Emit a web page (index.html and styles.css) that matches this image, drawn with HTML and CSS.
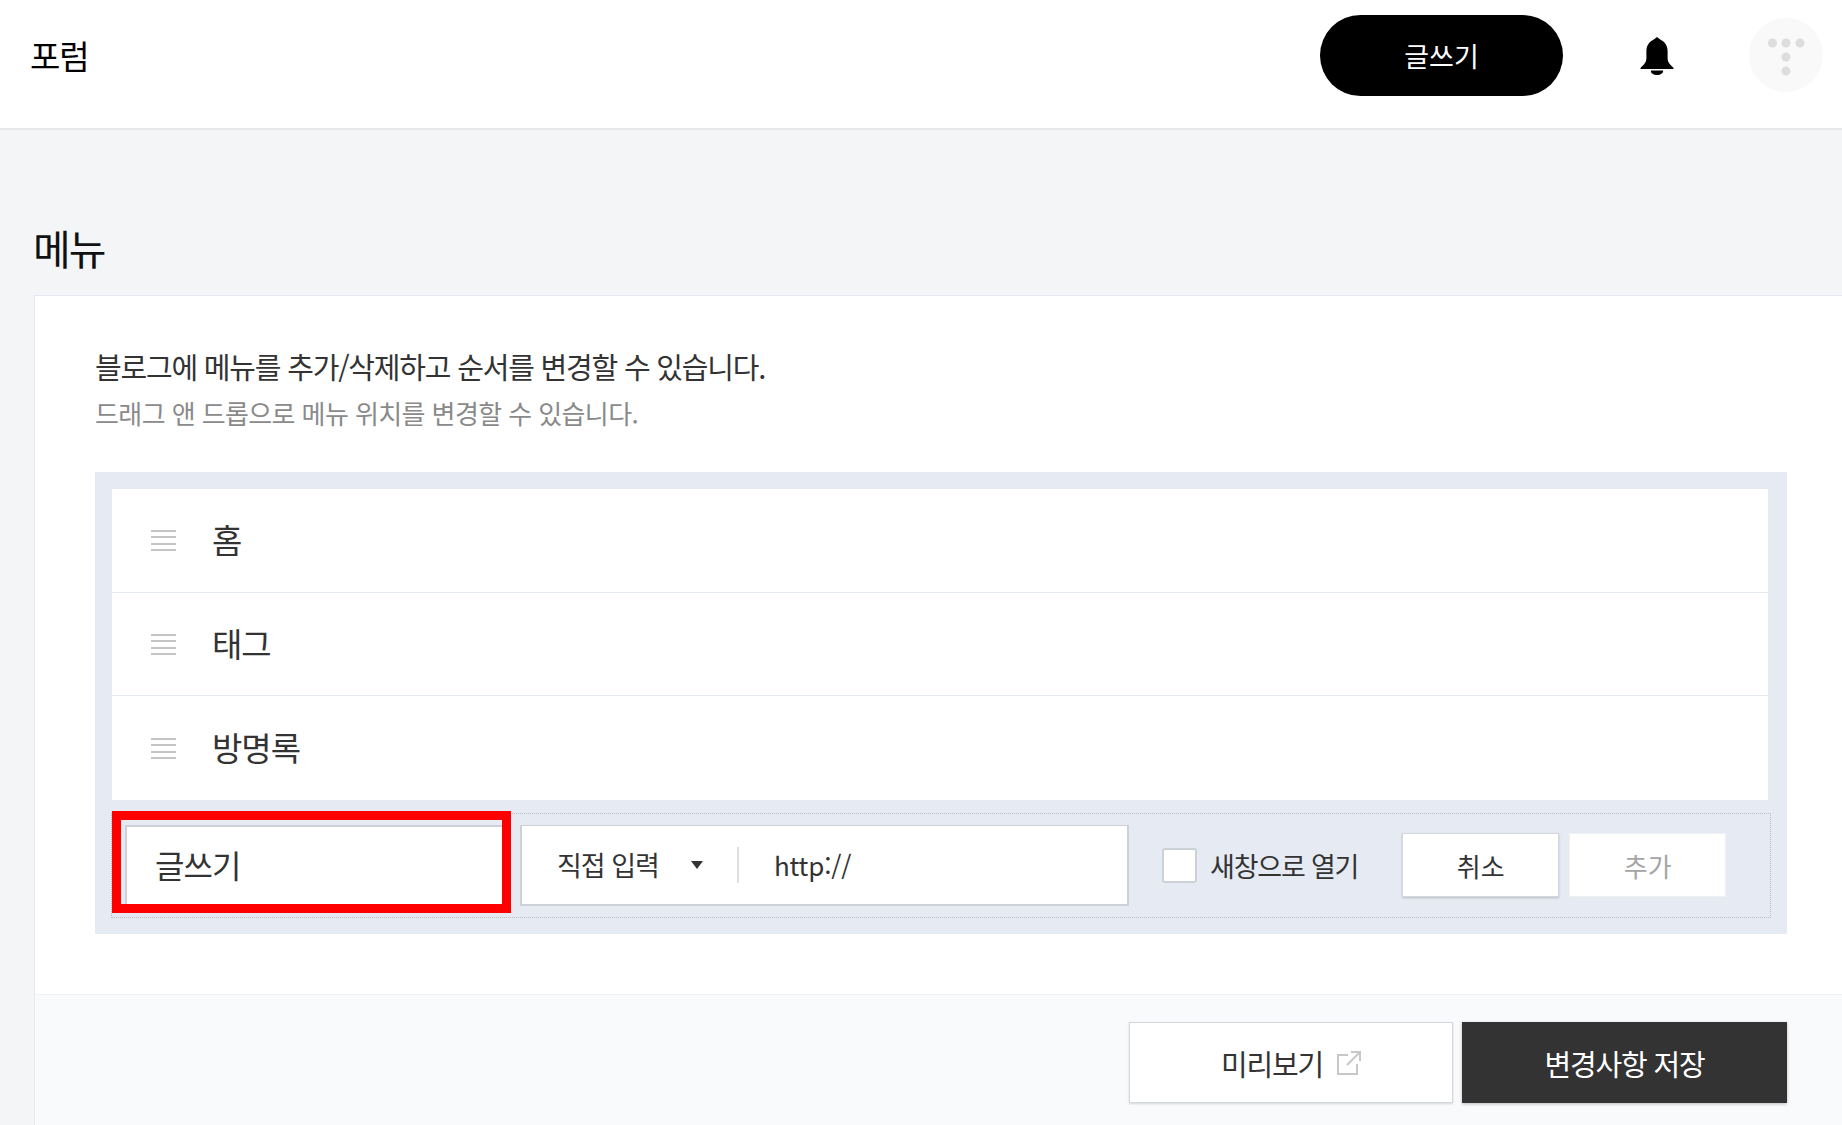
FILE: index.html
```html
<!DOCTYPE html>
<html lang="ko">
<head>
    <meta charset="UTF-8">
    <meta name="viewport" content="width=device-width, initial-scale=1.0">
    <title>메뉴</title>
    <link rel="stylesheet" href="styles.css">
</head>
<body>
    <header class="topbar">
        <div class="brand">포럼</div>
        <button class="write-btn">글쓰기</button>
        <svg class="bell" viewBox="0 0 34 38" aria-hidden="true">
            <path d="M17 0l3.2 2.4C25 4.6 27.6 9 27.6 14v7.5c0 3.4 2.2 6 4.8 8.2.9.7 1.2 1.6 1.2 2.3H.4c0-.7.3-1.6 1.2-2.3 2.6-2.2 4.800-4.800 4.800-8.200V14c0-5 2.600-9.400 7.400-11.600z"/>
            <path d="M10.800 33.500h12.400c0 2.800-2.600 4.500-6.200 4.500s-6.200-1.700-6.200-4.500z"/>
        </svg>
        <svg class="avatar" viewBox="0 0 74 74" aria-hidden="true">
            <circle cx="37" cy="37" r="37" fill="#f9f9f9"/>
            <circle cx="23.500" cy="25" r="4.500" fill="#dddddd"/>
            <circle cx="37" cy="25" r="4.500" fill="#dddddd"/>
            <circle cx="51" cy="25" r="4.500" fill="#dddddd"/>
            <circle cx="37" cy="39" r="4.500" fill="#dddddd"/>
            <circle cx="37" cy="53" r="4.500" fill="#dddddd"/>
        </svg>
    </header>

    <main class="content">
        <h2 class="page-title">메뉴</h2>
        <section class="panel">
            <div class="panel-body">
                <p class="desc">블로그에 메뉴를 추가/삭제하고 순서를 변경할 수 있습니다.</p>
                <p class="desc-sub">드래그 앤 드롭으로 메뉴 위치를 변경할 수 있습니다.</p>

                <div class="menu-box">
                    <ul class="menu-list">
                        <li class="menu-row"><span class="handle"></span>홈</li>
                        <li class="menu-row"><span class="handle"></span>태그</li>
                        <li class="menu-row"><span class="handle"></span>방명록</li>
                    </ul>
                    <div class="add-row">
                        <div class="name-field">
                            글쓰기
                            <span class="red-mark"></span>
                        </div>
                        <div class="url-field">
                            <span class="type-select">직접 입력</span>
                            <span class="caret"></span>
                            <span class="url-text">http://</span>
                        </div>
                        <label class="new-window"><span class="check"></span>새창으로 열기</label>
                        <button class="small-btn">취소</button>
                        <button class="small-btn off">추가</button>
                    </div>
                </div>
            </div>
            <div class="panel-foot">
                <button class="preview-btn">미리보기
                    <svg class="ext" viewBox="0 0 24 24" aria-hidden="true">
                        <path d="M11 4H1v19h19V13M10 14L22 2M14 1h9v9" fill="none" stroke="#c8c8c8" stroke-width="2"/>
                    </svg>
                </button>
                <button class="save-btn">변경사항 저장</button>
            </div>
        </section>
    </main>
</body>
</html>
```

FILE: styles.css
```css
* {
    box-sizing: border-box;
}
body {
    margin: 0;
    height: 1125px;
    overflow: hidden;
    background: #f4f5f7;
    font-family: "Noto Sans CJK KR", "Noto Sans", sans-serif;
    color: #333;
}
button {
    font-family: inherit;
    cursor: pointer;
}

.topbar {
    display: flex;
    align-items: center;
    height: 130px;
    padding: 0 19px 18px 30px;
    background: #fff;
    border-bottom: 2px solid #e6e8ec;
}
.brand {
    font-size: 33px;
    font-weight: 400;
    letter-spacing: -1px;
    color: #000;
    margin-right: auto;
}
.write-btn {
    width: 243px;
    height: 81px;
    background: #000;
    color: #fff;
    border: none;
    border-radius: 41px;
    font-size: 27px;
}
.bell {
    width: 34px;
    height: 38px;
    margin-left: 77px;
    margin-top: 1px;
    fill: #000;
}
.avatar {
    width: 74px;
    height: 74px;
    margin-left: 75px;
}

.page-title {
    margin: 0;
    padding: 93px 0 0 33px;
    height: 165px;
    font-size: 41px;
    line-height: 48px;
    font-weight: 400;
    letter-spacing: -2px;
    color: #111;
}

.panel {
    margin-left: 34px;
    height: 830px;
    background: #fff;
    border-top: 1px solid #e6e9f2;
    border-left: 1px solid #e6e9f2;
}
.panel-body {
    height: 699px;
    padding: 50px 55px 0 60px;
    border-bottom: 1px solid #f1f2f5;
}
.desc {
    margin: 0;
    font-size: 29px;
    line-height: 40px;
    letter-spacing: -1.2px;
    color: #333;
}
.desc-sub {
    margin: 7px 0 0;
    font-size: 26px;
    line-height: 40px;
    letter-spacing: -0.6px;
    color: #8a8a8a;
}

.menu-box {
    margin-top: 39px;
    height: 462px;
    padding: 17px;
    background: #e6ebf3;
}
.menu-list {
    list-style: none;
    margin: 0 2px 0 0;
    padding: 0;
    background: #fff;
}
.menu-row {
    display: flex;
    align-items: center;
    height: 103.500px;
    padding: 0 0 2px 39px;
    font-size: 33px;
    letter-spacing: -1px;
    color: #333;
    border-bottom: 1px solid #e6ebf3;
}
.menu-row:last-child {
    border-bottom: none;
}
.handle {
    width: 25px;
    height: 21px;
    margin: 3px 36px 0 0;
    /* four thin grey lines */
    background: repeating-linear-gradient(#c4c4c4 0, #c4c4c4 2px, transparent 2px, transparent 6.300px);
}

.add-row {
    display: flex;
    align-items: center;
    height: 105px;
    margin-top: 13px;
    margin-right: -1px;
    margin-left: -1px;
    padding: 0 0 0 13px;
    border: 1px dotted #b9bcc2;
}
.name-field {
    position: relative;
    width: 379px;
    height: 81px;
    padding-left: 28px;
    line-height: 74px;
    background: #fff;
    border: 2px solid #ccd1d8;
    border-right: none;
    font-size: 32px;
    letter-spacing: -1px;
    color: #333;
}
.red-mark {
    position: absolute;
    top: -16px;
    left: -15px;
    width: 399px;
    height: 102px;
    border: 9px solid #f00;
}
.url-field {
    display: flex;
    align-items: center;
    width: 609px;
    height: 81px;
    margin-left: 16px;
    padding-left: 35px;
    background: #fff;
    border: 2px solid #ccd1d8;
    border-top-width: 1px;
    font-size: 27px;
    color: #333;
}
.type-select {
    width: 134px;
    letter-spacing: -1px;
}
.caret {
    width: 0;
    height: 0;
    border-left: 6.500px solid transparent;
    border-right: 6.500px solid transparent;
    border-top: 8px solid #333;
}
.url-text {
    margin-left: 34px;
    padding-left: 35px;
    line-height: 36px;
    font-size: 26px;
    letter-spacing: -0.2px;
    border-left: 2px solid #dcdfe4;
}
.new-window {
    display: flex;
    align-items: center;
    margin-left: 33px;
    margin-right: 44px;
    font-size: 27px;
    letter-spacing: -1.2px;
    color: #333;
}
.check {
    width: 35px;
    height: 35px;
    margin-right: 13px;
    background: #fff;
    border: 2px solid #ccd1d8;
    border-radius: 3px;
}
.small-btn {
    width: 157px;
    height: 64px;
    margin-right: 10px;
    background: #fff;
    border: 1px solid #d3d8e0;
    box-shadow: 0 1px 2px rgba(0, 0, 0, 0.2);
    font-size: 26px;
    color: #333;
}
.small-btn.off {
    border-color: #eef0f4;
    box-shadow: none;
    color: #a5a5a5;
}

.panel-foot {
    display: flex;
    justify-content: flex-end;
    gap: 9px;
    height: 130px;
    padding: 27px 55px 0 0;
    background: #f9fafc;
}
.preview-btn {
    display: flex;
    align-items: center;
    justify-content: center;
    gap: 14px;
    width: 324px;
    height: 81px;
    background: #fff;
    border: 1px solid #d3d8e0;
    box-shadow: 0 1px 2px rgba(0, 0, 0, 0.15);
    font-size: 29px;
    letter-spacing: -1.2px;
    color: #333;
}
.ext {
    width: 24px;
    height: 24px;
}
.save-btn {
    width: 325px;
    height: 81px;
    background: #333;
    border: none;
    box-shadow: 0 1px 3px rgba(0, 0, 0, 0.25);
    font-size: 29px;
    letter-spacing: -1.2px;
    color: #fff;
}
```
